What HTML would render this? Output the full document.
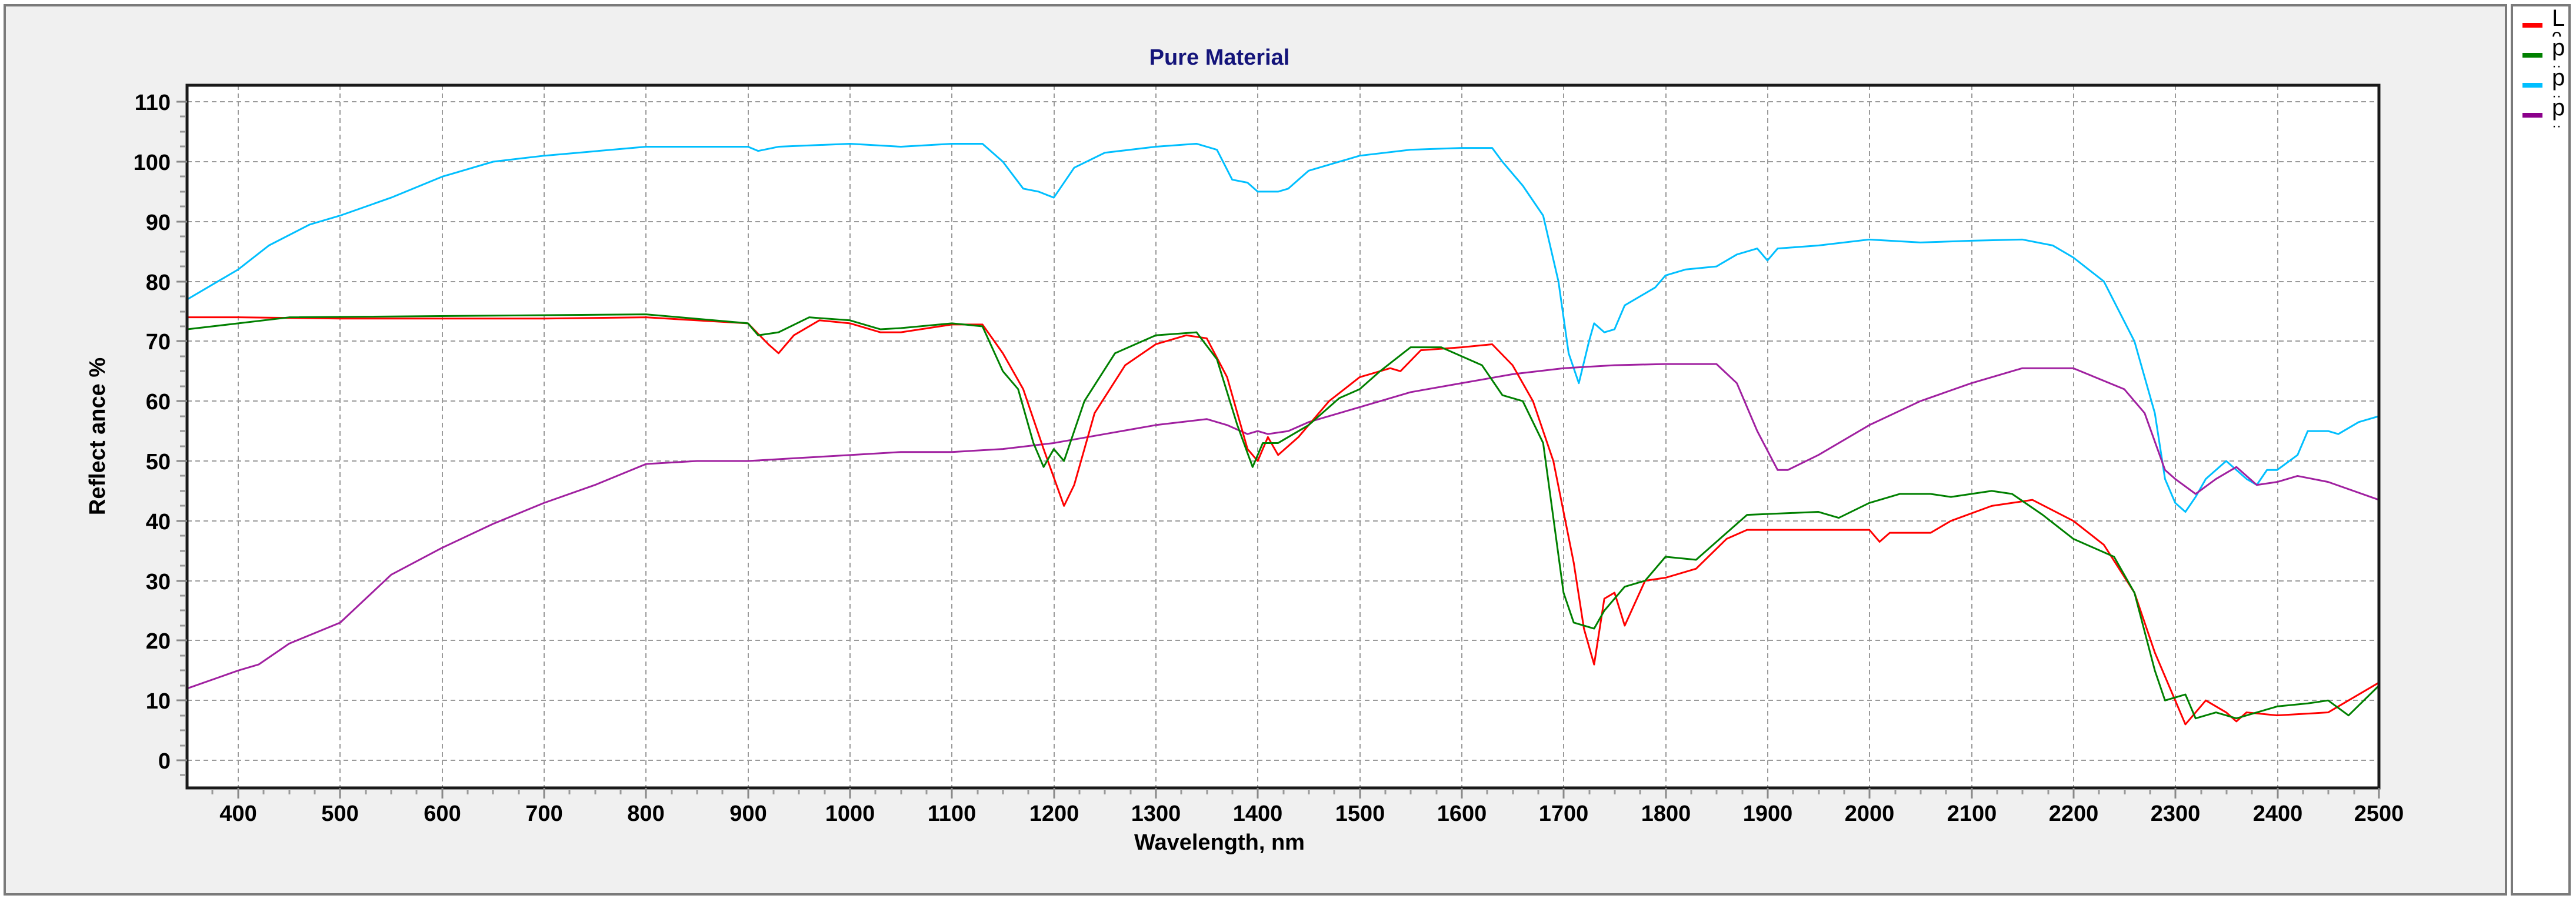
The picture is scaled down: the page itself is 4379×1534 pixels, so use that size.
<!DOCTYPE html>
<html><head><meta charset="utf-8"><style>
html,body{margin:0;padding:0;background:#fff;}
body{width:4379px;height:1534px;overflow:hidden;}
svg{display:block}
text{font-family:"Liberation Sans",sans-serif;}
</style></head><body>
<svg width="4379" height="1534" viewBox="0 0 4379 1534" xmlns="http://www.w3.org/2000/svg">
<rect x="0" y="0" width="4379" height="1534" fill="#fff"/>
<rect x="8" y="9" width="4252" height="1512" fill="#f0f0f0" stroke="#7a7a7a" stroke-width="4"/>
<rect x="4270" y="9" width="98" height="1512" fill="#fff" stroke="#7a7a7a" stroke-width="4"/>
<line x1="4288" y1="43" x2="4322" y2="43" stroke="#ff0000" stroke-width="8"/>
<line x1="4288" y1="94" x2="4322" y2="94" stroke="#008000" stroke-width="8"/>
<line x1="4288" y1="145" x2="4322" y2="145" stroke="#00bfff" stroke-width="8"/>
<line x1="4288" y1="196" x2="4322" y2="196" stroke="#8b008b" stroke-width="8"/>
<g font-size="40" fill="#000">
<text x="4338" y="44">L</text><text x="4338" y="70" font-size="30">ᴖ</text>
<text x="4338" y="94">p</text><text x="4338" y="120" font-size="24">··</text>
<text x="4338" y="145">p</text><text x="4338" y="171" font-size="24">··</text>
<text x="4338" y="196">p</text><text x="4338" y="222" font-size="24">··</text>
</g>
<text x="2073" y="110" text-anchor="middle" font-size="38" font-weight="bold" fill="#14147a">Pure Material</text>
<rect x="318" y="145" width="3726" height="1195" fill="#fff"/>
<g stroke="#9a9a9a" stroke-width="2" stroke-dasharray="8,6" fill="none">
<path d="M405 145V1340M578 145V1340M752 145V1340M925 145V1340M1098 145V1340M1272 145V1340M1445 145V1340M1618 145V1340M1792 145V1340M1965 145V1340M2138 145V1340M2312 145V1340M2485 145V1340M2658 145V1340M2832 145V1340M3005 145V1340M3178 145V1340M3352 145V1340M3525 145V1340M3698 145V1340M3872 145V1340"/>
<path d="M318 173H4044M318 275H4044M318 377H4044M318 479H4044M318 580H4044M318 682H4044M318 784H4044M318 886H4044M318 988H4044M318 1089H4044M318 1191H4044M318 1293H4044"/>
</g>
<g transform="matrix(1.733 0 0 -10.18 -288.2 1293)" fill="none" stroke-width="3" stroke-linejoin="round">
<polyline vector-effect="non-scaling-stroke" stroke="#00bfff" points="350,77 380,80 400,82 430,86 470,89.5 500,91 550,94 600,97.5 650,100 700,101 800,102.5 900,102.5 910,101.8 930,102.5 1000,103 1050,102.5 1100,103 1130,103 1150,100 1170,95.5 1185,95 1200,94 1220,99 1250,101.5 1300,102.5 1340,103 1360,102 1375,97 1390,96.5 1400,95 1420,95 1430,95.5 1450,98.5 1500,101 1550,102 1600,102.3 1630,102.3 1640,100 1660,96 1680,91 1695,80 1705,68 1715,63 1725,70 1730,73 1740,71.5 1750,72 1760,76 1790,79 1800,81 1820,82 1850,82.5 1870,84.5 1890,85.5 1900,83.5 1910,85.5 1950,86 2000,87 2050,86.5 2100,86.8 2150,87 2180,86 2200,84 2230,80 2260,70 2280,58 2290,47 2300,43 2310,41.5 2320,44 2330,47 2350,50 2370,47 2380,46 2390,48.5 2400,48.5 2420,51 2430,55 2450,55 2460,54.5 2480,56.5 2500,57.5"/>
<polyline vector-effect="non-scaling-stroke" stroke="#a020a0" points="350,12 400,15 420,16 450,19.5 500,23 550,31 600,35.5 650,39.5 700,43 750,46 800,49.5 850,50 900,50 950,50.5 1000,51 1050,51.5 1100,51.5 1150,52 1200,53 1250,54.5 1300,56 1350,57 1370,56 1390,54.5 1400,55 1410,54.5 1430,55 1450,56.5 1500,59 1550,61.5 1600,63 1650,64.5 1700,65.5 1750,66 1800,66.2 1850,66.2 1870,63 1890,55 1910,48.5 1920,48.5 1950,51 2000,56 2050,60 2100,63 2150,65.5 2200,65.5 2250,62 2270,58 2290,48.5 2300,47 2320,44.5 2340,47 2360,49 2380,46 2400,46.5 2420,47.5 2450,46.5 2500,43.5"/>
<polyline vector-effect="non-scaling-stroke" stroke="#ff0000" points="350,74 400,74 500,73.8 700,73.8 800,74 900,73 920,69.5 930,68 945,71 970,73.5 1000,73 1030,71.5 1050,71.5 1100,72.8 1130,72.8 1150,68 1170,62 1190,52 1210,42.5 1220,46 1240,58 1270,66 1300,69.5 1330,71 1350,70.5 1370,64 1390,52 1400,50 1410,54 1420,51 1440,54 1470,60 1500,64 1530,65.5 1540,65 1560,68.5 1600,69 1630,69.5 1650,66 1670,60 1690,50 1710,33 1720,22 1730,16 1740,27 1750,28 1760,22.5 1780,30 1800,30.5 1830,32 1860,37 1880,38.5 1950,38.5 2000,38.5 2010,36.5 2020,38 2060,38 2080,40 2120,42.5 2140,43 2160,43.5 2200,40 2230,36 2260,28 2280,18 2300,10 2310,6 2320,8 2330,10 2350,8 2360,6.5 2370,8 2400,7.5 2450,8 2470,10 2500,13"/>
<polyline vector-effect="non-scaling-stroke" stroke="#008000" points="350,72 400,73 450,74 800,74.5 900,73 910,71 930,71.5 960,74 1000,73.5 1030,72 1050,72.2 1100,73 1130,72.5 1150,65 1165,62 1180,53 1190,49 1200,52 1210,50 1230,60 1260,68 1300,71 1340,71.5 1360,67 1380,56 1395,49 1405,53 1420,53 1450,56 1480,60.5 1500,62 1520,65 1550,69 1580,69 1620,66 1640,61 1660,60 1680,53 1700,28 1710,23 1720,22.5 1730,22 1740,25 1760,29 1780,30 1800,34 1830,33.5 1860,38 1880,41 1950,41.5 1970,40.5 2000,43 2030,44.5 2060,44.5 2080,44 2120,45 2140,44.5 2170,41 2200,37 2240,34 2260,28 2280,15 2290,10 2310,11 2320,7 2340,8 2360,7 2400,9 2430,9.5 2450,10 2470,7.5 2500,12.5"/>
</g>
<rect x="318" y="145" width="3726" height="1195" fill="none" stroke="#1a1a1a" stroke-width="5"/>
<g stroke="#888" stroke-width="3">
<path d="M300 173H318M300 275H318M300 377H318M300 479H318M300 580H318M300 682H318M300 784H318M300 886H318M300 988H318M300 1089H318M300 1191H318M300 1293H318"/>
<path d="M405 1340V1358M578 1340V1358M752 1340V1358M925 1340V1358M1098 1340V1358M1272 1340V1358M1445 1340V1358M1618 1340V1358M1792 1340V1358M1965 1340V1358M2138 1340V1358M2312 1340V1358M2485 1340V1358M2658 1340V1358M2832 1340V1358M3005 1340V1358M3178 1340V1358M3352 1340V1358M3525 1340V1358M3698 1340V1358M3872 1340V1358M4044 1340V1358"/>
</g>
<g stroke="#999" stroke-width="3" stroke-dasharray="0,0">
<path d="M361 1342v9M448 1342v9M492 1342v9M535 1342v9M622 1342v9M665 1342v9M708 1342v9M795 1342v9M838 1342v9M882 1342v9M968 1342v9M1012 1342v9M1055 1342v9M1142 1342v9M1185 1342v9M1228 1342v9M1315 1342v9M1358 1342v9M1402 1342v9M1488 1342v9M1532 1342v9M1575 1342v9M1662 1342v9M1705 1342v9M1748 1342v9M1835 1342v9M1878 1342v9M1922 1342v9M2008 1342v9M2052 1342v9M2095 1342v9M2182 1342v9M2225 1342v9M2268 1342v9M2355 1342v9M2398 1342v9M2442 1342v9M2528 1342v9M2572 1342v9M2615 1342v9M2702 1342v9M2745 1342v9M2788 1342v9M2875 1342v9M2918 1342v9M2962 1342v9M3048 1342v9M3092 1342v9M3135 1342v9M3222 1342v9M3265 1342v9M3308 1342v9M3395 1342v9M3438 1342v9M3482 1342v9M3568 1342v9M3612 1342v9M3655 1342v9M3742 1342v9M3785 1342v9M3828 1342v9M3915 1342v9M3958 1342v9M4002 1342v9"/>
<path d="M306 198h10M306 224h10M306 249h10M306 300h10M306 326h10M306 351h10M306 402h10M306 428h10M306 453h10M306 504h10M306 530h10M306 555h10M306 606h10M306 631h10M306 657h10M306 708h10M306 733h10M306 759h10M306 809h10M306 835h10M306 860h10M306 911h10M306 937h10M306 962h10M306 1013h10M306 1038h10M306 1064h10M306 1115h10M306 1140h10M306 1166h10M306 1217h10M306 1242h10M306 1268h10M306 1318h10"/>
</g>
<g font-size="38" font-weight="bold" fill="#000" text-anchor="end">
<text x="290" y="187">110</text><text x="290" y="289">100</text><text x="290" y="391">90</text><text x="290" y="493">80</text><text x="290" y="594">70</text><text x="290" y="696">60</text><text x="290" y="798">50</text><text x="290" y="900">40</text><text x="290" y="1002">30</text><text x="290" y="1103">20</text><text x="290" y="1205">10</text><text x="290" y="1307">0</text>
</g>
<g font-size="38" font-weight="bold" fill="#000" text-anchor="middle">
<text x="405" y="1396">400</text><text x="578" y="1396">500</text><text x="752" y="1396">600</text><text x="925" y="1396">700</text><text x="1098" y="1396">800</text><text x="1272" y="1396">900</text><text x="1445" y="1396">1000</text><text x="1618" y="1396">1100</text><text x="1792" y="1396">1200</text><text x="1965" y="1396">1300</text><text x="2138" y="1396">1400</text><text x="2312" y="1396">1500</text><text x="2485" y="1396">1600</text><text x="2658" y="1396">1700</text><text x="2832" y="1396">1800</text><text x="3005" y="1396">1900</text><text x="3178" y="1396">2000</text><text x="3352" y="1396">2100</text><text x="3525" y="1396">2200</text><text x="3698" y="1396">2300</text><text x="3872" y="1396">2400</text><text x="4044" y="1396">2500</text>
</g>
<text x="2073" y="1445" text-anchor="middle" font-size="38" font-weight="bold" fill="#000">Wavelength, nm</text>
<text transform="translate(178,742) rotate(-90)" text-anchor="middle" font-size="38" font-weight="bold" fill="#000">Reflect ance %</text>
</svg>
</body></html>
